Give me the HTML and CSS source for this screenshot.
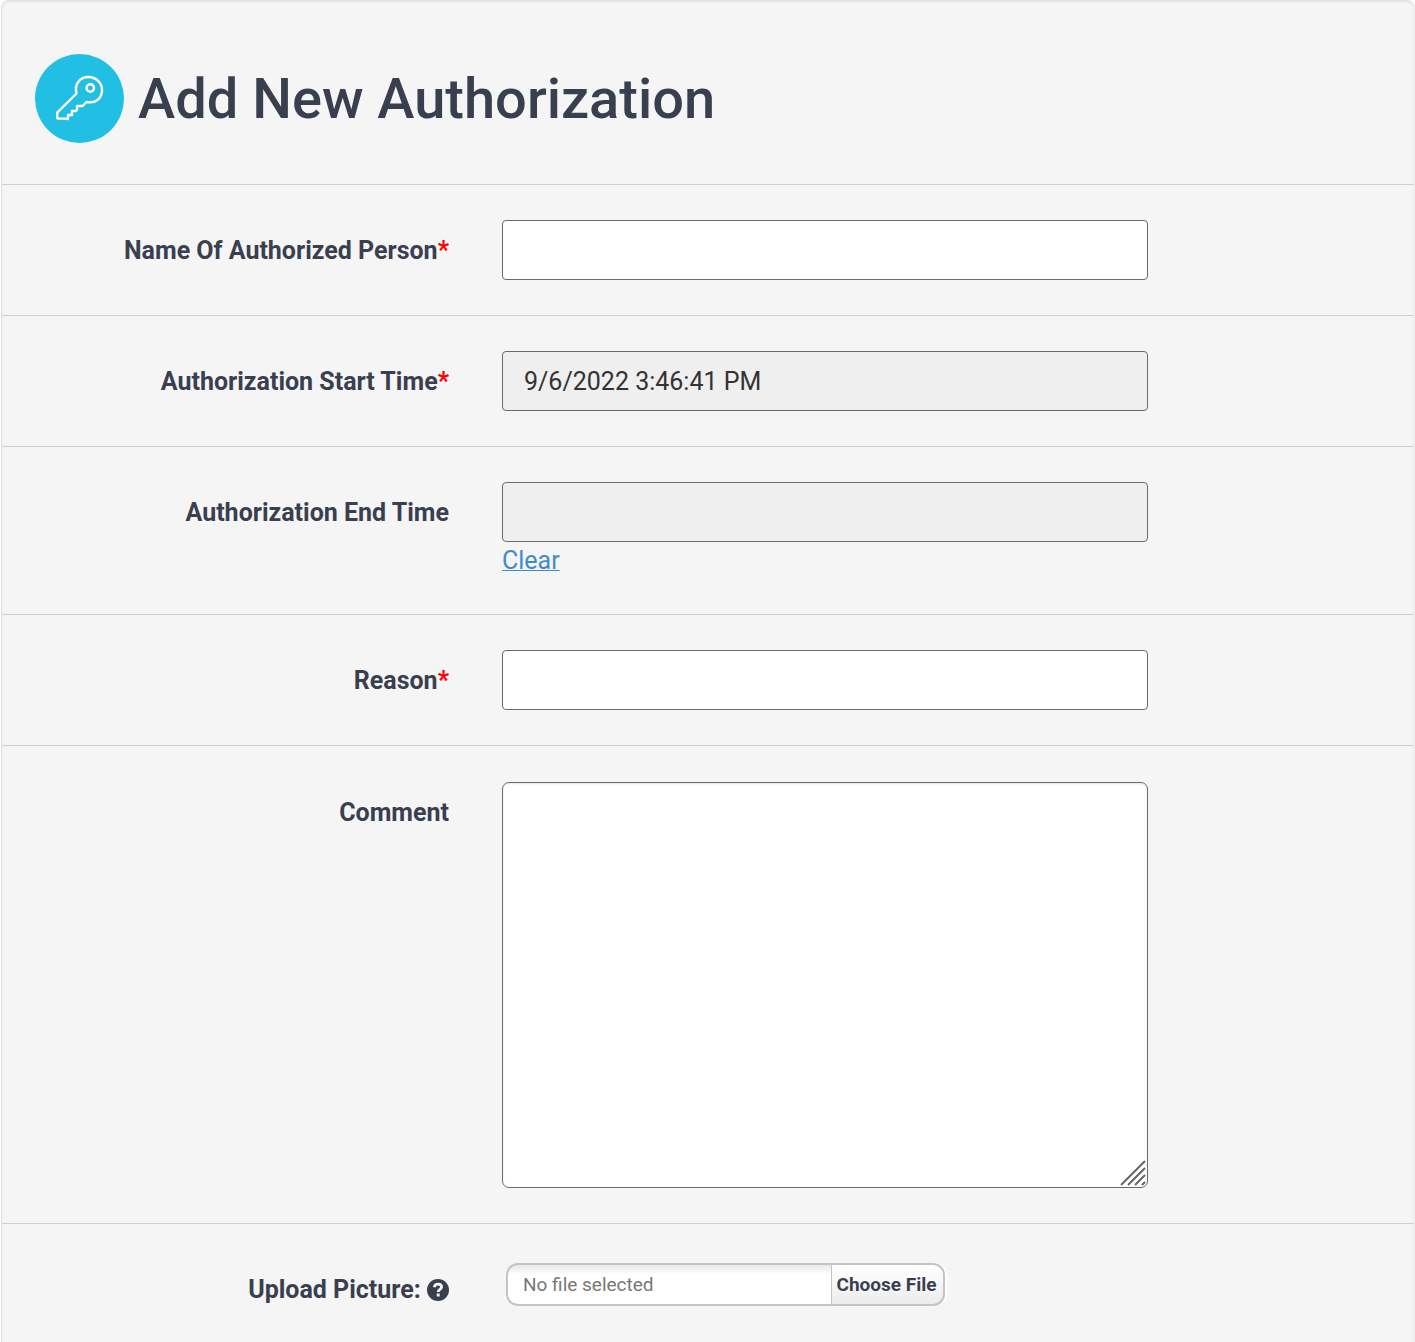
FILE: index.html
```html
<!DOCTYPE html>
<html lang="en">
<head>
<meta charset="utf-8">
<meta name="viewport" content="width=device-width, initial-scale=1">
<title>Add New Authorization</title>
<link rel="stylesheet" href="styles.css">
</head>
<body>
<form class="panel">
  <header class="panel-header">
    <svg class="key-icon" viewBox="0 0 89 89" aria-hidden="true">
      <circle cx="44.500" cy="44.500" r="44.500" fill="#20bfe3"/>
      <g fill="none" stroke="#fff" stroke-width="2.400" stroke-linejoin="round">
        <path d="M41.500 39.500C39 30 45 23 53.500 23C61 23 67 29 67 36C67 44 61 50 51.500 48L49.500 50L47.500 52H42V56L40.500 57H37V61H33V65H32V64.600H23Q22.200 64.600 22.200 63.600V58.600Z"/>
        <circle cx="55.300" cy="34" r="3.700"/>
      </g>
    </svg>
    <h1 class="title">Add New Authorization</h1>
  </header>

  <div class="row">
    <label class="label" for="person">Name Of Authorized Person<span class="required">*</span></label>
    <div class="field"><input class="input" id="person" type="text" required></div>
  </div>

  <div class="row">
    <label class="label" for="start">Authorization Start Time<span class="required">*</span></label>
    <div class="field"><input class="input readonly" id="start" type="text" value="9/6/2022 3:46:41 PM" readonly></div>
  </div>

  <div class="row">
    <label class="label" for="end">Authorization End Time</label>
    <div class="field">
      <input class="input readonly" id="end" type="text" readonly>
      <a class="clear" href="#end">Clear</a>
    </div>
  </div>

  <div class="row">
    <label class="label" for="reason">Reason<span class="required">*</span></label>
    <div class="field"><input class="input" id="reason" type="text" required></div>
  </div>

  <div class="row comment-row">
    <label class="label" for="comment">Comment</label>
    <div class="field comment-field">
      <textarea class="input textarea" id="comment"></textarea>
      <svg class="grip" viewBox="0 0 26 26" aria-hidden="true">
        <path d="M1 25L25 1M8 25L25 8M15 25L25 15M22 25L25 22" stroke="#666" stroke-width="2" fill="none"/>
      </svg>
    </div>
  </div>

  <div class="row">
    <label class="label" for="picture">Upload Picture:
      <svg class="help" viewBox="0 0 22 22" aria-hidden="true">
        <circle cx="11" cy="11" r="11" fill="#393f4f"/>
        <path d="M7.200 8.300C7.600 6.200 9 5.200 11 5.200C13.300 5.200 14.600 6.500 14.600 8.100C14.600 10.500 11.200 10.300 11.200 13" fill="none" stroke="#f5f5f5" stroke-width="2.800"/>
        <path d="M9.700 14.500h3v3h-3z" fill="#f5f5f5"/>
      </svg>
    </label>
    <div class="field uploader">
      <input class="file-name" id="picture" type="text" placeholder="No file selected" readonly>
      <button class="choose" type="button">Choose File</button>
    </div>
  </div>
</form>
</body>
</html>
```
FILE: styles.css
```css
* {
  box-sizing: border-box;
}

body {
  margin: 0;
  background: #fff;
  color: #393f4f;
  font-family: Roboto, "Liberation Sans", sans-serif;
  font-size: 25px;
  line-height: 37px;
}

.panel {
  min-height: 100vh;
  margin-left: 1px;
  border: 1px solid #e2e2e2;
  border-bottom: 0;
  border-right-color: #eee;
  border-radius: 8px 8px 0 0;
  background: #f5f5f5;
  box-shadow: inset 0 1px 2px #e4e4e4;
}

.panel-header {
  display: flex;
  align-items: center;
  gap: 14px;
  padding: 53px 33px 41px;
}

.key-icon {
  flex: none;
  width: 89px;
  height: 89px;
}

.title {
  margin: 0;
  font-size: 56px;
  font-weight: 500;
  line-height: 64px;
}

.row {
  display: grid;
  grid-template-columns: 447fr 646fr 213fr;
  column-gap: 53px;
  padding: 35px 0;
  border-top: 1px solid #d0d0d0;
}

.comment-row {
  padding-top: 36px;
}

.label {
  padding-top: 12px;
  font-weight: 700;
  text-align: right;
}

.required {
  color: #f00;
}

.field {
  min-width: 0;
}

.input {
  display: block;
  width: 100%;
  height: 60px;
  margin: 0;
  padding: 0 21px;
  border: 1px solid #6b6b6b;
  border-radius: 4px;
  background: #fff;
  color: #333;
  font: inherit;
}

.readonly {
  background: #efefef;
}

.clear {
  display: block;
  width: max-content;
  color: #428bca;
  text-decoration: underline;
  text-decoration-thickness: 1px;
}

.comment-field {
  position: relative;
}

.textarea {
  height: 406px;
  padding: 12px 21px;
  border-radius: 7px;
  box-shadow: inset 0 1px 2px #e4e4e4;
  resize: none;
}

.grip {
  position: absolute;
  right: 2px;
  bottom: 2px;
  width: 26px;
  height: 26px;
}

.help {
  width: 22px;
  height: 22px;
  vertical-align: -3px;
}

.uploader {
  display: flex;
  padding: 4px;
}

.file-name {
  width: 325px;
  height: 43px;
  padding: 0 15px;
  border: 2px solid #c4c4c4;
  border-right: 0;
  border-radius: 12px 0 0 12px;
  background: linear-gradient(#e8e8e8, #fff 10px);
  font: inherit;
  font-size: 19px;
}

.file-name::placeholder {
  color: #777;
}

.choose {
  width: 114px;
  height: 43px;
  padding: 0 5px 0 3px;
  border: 2px solid #c4c4c4;
  border-left-width: 1px;
  border-radius: 0 12px 12px 0;
  background: linear-gradient(#fff, #ececec);
  box-shadow: 2px 0 2px #fff;
  color: #393f4f;
  font: inherit;
  font-size: 19px;
  font-weight: 700;
  text-shadow: 0 1px 1px #fff;
  white-space: nowrap;
}
```
